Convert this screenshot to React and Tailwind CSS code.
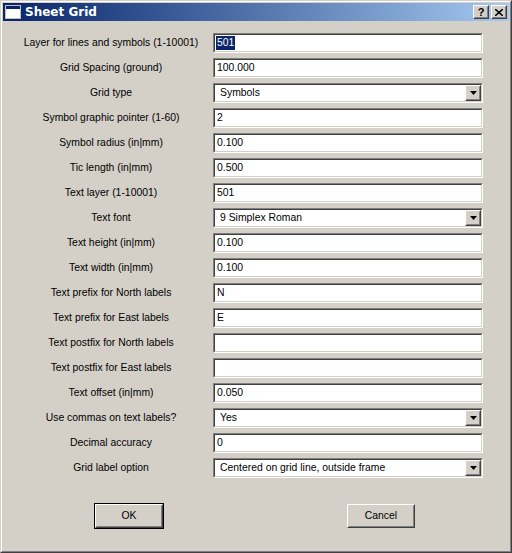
import React from "react";

const rows = [
  { label: "Layer for lines and symbols (1-10001)", value: "501", selected: true },
  { label: "Grid Spacing (ground)", value: "100.000" },
  { label: "Grid type", value: "Symbols", select: true },
  { label: "Symbol graphic pointer (1-60)", value: "2" },
  { label: "Symbol radius (in|mm)", value: "0.100" },
  { label: "Tic length (in|mm)", value: "0.500" },
  { label: "Text layer (1-10001)", value: "501" },
  { label: "Text font", value: "9 Simplex Roman", select: true },
  { label: "Text height (in|mm)", value: "0.100" },
  { label: "Text width (in|mm)", value: "0.100" },
  { label: "Text prefix for North labels", value: "N" },
  { label: "Text prefix for East labels", value: "E" },
  { label: "Text postfix for North labels", value: "" },
  { label: "Text postfix for East labels", value: "" },
  { label: "Text offset (in|mm)", value: "0.050" },
  { label: "Use commas on text labels?", value: "Yes", select: true },
  { label: "Decimal accuracy", value: "0" },
  { label: "Grid label option", value: "Centered on grid line, outside frame", select: true },
];

// classic sunken 2px border
function Sunken({ children }) {
  return (
    <div className="border border-t-[#808080] border-l-[#808080] border-b-white border-r-white w-[270px] h-[20px]">
      <div className="border border-t-[#404040] border-l-[#404040] border-b-[#d4d0c8] border-r-[#d4d0c8] h-full bg-white flex items-center">
        {children}
      </div>
    </div>
  );
}

function Raised({ className = "", children }) {
  return (
    <div className={`border border-t-white border-l-white border-b-[#404040] border-r-[#404040] bg-[#d4d0c8] ${className}`}>
      <div className="border border-t-[#d4d0c8] border-l-[#d4d0c8] border-b-[#808080] border-r-[#808080] w-full h-full flex items-center justify-center">
        {children}
      </div>
    </div>
  );
}

function Field({ row }) {
  if (row.select) {
    return (
      <Sunken>
        <span className="ml-[5px] flex-1">{row.value}</span>
        <Raised className="w-[16px] h-[16px]">
          <svg width="7" height="4" viewBox="0 0 7 4">
            <path d="M0 0h7L3.5 4z" fill="#000" />
          </svg>
        </Raised>
      </Sunken>
    );
  }
  return (
    <Sunken>
      {row.selected ? (
        <span className="ml-[1px] px-[1px] bg-[#0a246a] text-white leading-[14px]">{row.value}</span>
      ) : (
        <span className="ml-[2px] flex-1">{row.value}</span>
      )}
    </Sunken>
  );
}

export default function App() {
  return (
    <div
      className="w-[512px] h-[553px] bg-[#d4d0c8] border border-t-[#d4d0c8] border-l-[#d4d0c8] border-b-[#404040] border-r-[#404040] text-[10.4px] text-black"
      style={{ fontFamily: '"Liberation Sans", Arial, sans-serif' }}
    >
      <div className="h-full border border-t-white border-l-white border-b-[#808080] border-r-[#808080] p-[1px] flex flex-col">
        {/* Title bar */}
        <div className="h-[18px] bg-gradient-to-r from-[#0a246a] to-[#a6caf0] flex items-center pl-[2px] pr-[2px]">
          <div className="w-[16px] h-[14px] border border-[#c0c0c0] bg-white flex flex-col">
            <div className="h-[3px] bg-[#0a246a]" />
          </div>
          <span className="ml-[4px] text-white font-bold text-[12px] flex-1" style={{ fontFamily: "Tahoma, 'DejaVu Sans', sans-serif" }}>
            Sheet Grid
          </span>
          <Raised className="w-[16px] h-[14px]">
            <span className="font-bold text-[11px] leading-none">?</span>
          </Raised>
          <Raised className="w-[16px] h-[14px] ml-[2px]">
            <svg width="8" height="7" viewBox="0 0 8 7">
              <path d="M0 0l8 7M8 0L0 7" stroke="#000" strokeWidth="1.6" />
            </svg>
          </Raised>
        </div>

        {/* Form */}
        <div className="flex flex-col gap-[5px] pt-[12px] pl-[7px]">
          {rows.map((row, i) => (
            <div key={i} className="flex items-center h-[20px]">
              <div className="w-[202px] text-center whitespace-nowrap">{row.label}</div>
              <div className="ml-[1px]">
                <Field row={row} />
              </div>
            </div>
          ))}
        </div>

        {/* Buttons */}
        <div className="flex mt-[25px] pl-[91px]">
          <div className="border border-black w-[70px] h-[26px]">
            <Raised className="w-full h-full">OK</Raised>
          </div>
          <Raised className="w-[68px] h-[24px] ml-[183px] mt-[1px]">Cancel</Raised>
        </div>
      </div>
    </div>
  );
}
